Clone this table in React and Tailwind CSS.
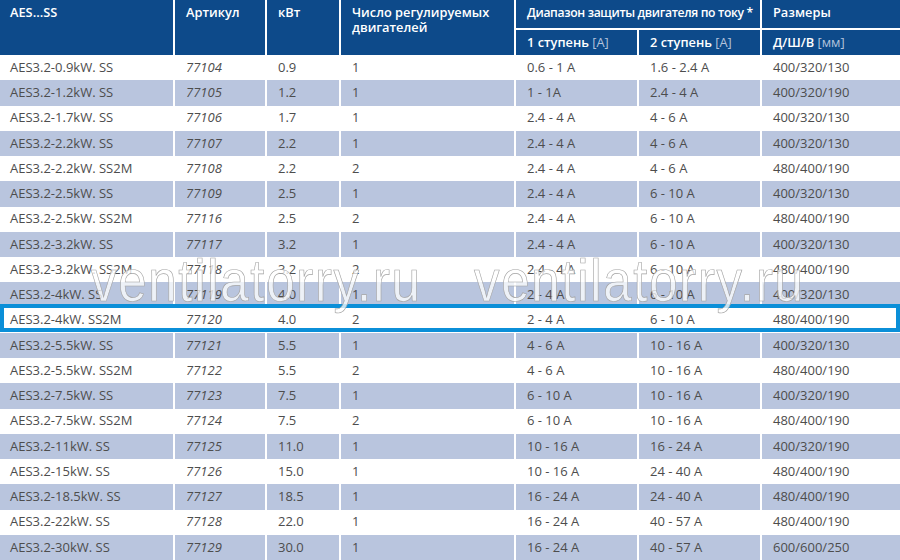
import React from "react";

const rows = [
  ["AES3.2-0.9kW. SS", "77104", "0.9", "1", "0.6 - 1 A", "1.6 - 2.4 A", "400/320/130"],
  ["AES3.2-1.2kW. SS", "77105", "1.2", "1", "1 - 1A", "2.4 - 4 A", "400/320/190"],
  ["AES3.2-1.7kW. SS", "77106", "1.7", "1", "2.4 - 4 A", "4 - 6 A", "400/320/130"],
  ["AES3.2-2.2kW. SS", "77107", "2.2", "1", "2.4 - 4 A", "4 - 6 A", "400/320/130"],
  ["AES3.2-2.2kW. SS2M", "77108", "2.2", "2", "2.4 - 4 A", "4 - 6 A", "480/400/190"],
  ["AES3.2-2.5kW. SS", "77109", "2.5", "1", "2.4 - 4 A", "6 - 10 A", "400/320/130"],
  ["AES3.2-2.5kW. SS2M", "77116", "2.5", "2", "2.4 - 4 A", "6 - 10 A", "480/400/190"],
  ["AES3.2-3.2kW. SS", "77117", "3.2", "1", "2.4 - 4 A", "6 - 10 A", "400/320/130"],
  ["AES3.2-3.2kW. SS2M", "77118", "3.2", "2", "2.4 - 4 A", "6 - 10 A", "480/400/190"],
  ["AES3.2-4kW. SS", "77119", "4.0", "1", "2 - 4 A", "6 - 10 A", "400/320/130"],
  ["AES3.2-4kW. SS2M", "77120", "4.0", "2", "2 - 4 A", "6 - 10 A", "480/400/190"],
  ["AES3.2-5.5kW. SS", "77121", "5.5", "1", "4 - 6 A", "10 - 16 A", "400/320/130"],
  ["AES3.2-5.5kW. SS2M", "77122", "5.5", "2", "4 - 6 A", "10 - 16 A", "480/400/190"],
  ["AES3.2-7.5kW. SS", "77123", "7.5", "1", "6 - 10 A", "10 - 16 A", "400/320/190"],
  ["AES3.2-7.5kW. SS2M", "77124", "7.5", "2", "6 - 10 A", "10 - 16 A", "480/400/190"],
  ["AES3.2-11kW. SS", "77125", "11.0", "1", "10 - 16 A", "16 - 24 A", "400/320/190"],
  ["AES3.2-15kW. SS", "77126", "15.0", "1", "10 - 16 A", "24 - 40 A", "480/400/190"],
  ["AES3.2-18.5kW. SS", "77127", "18.5", "1", "16 - 24 A", "24 - 40 A", "480/400/190"],
  ["AES3.2-22kW. SS", "77128", "22.0", "1", "16 - 24 A", "40 - 57 A", "480/400/190"],
  ["AES3.2-30kW. SS", "77129", "30.0", "1", "16 - 24 A", "40 - 57 A", "600/600/250"],
];

const cols = "grid grid-cols-[173px_90px_72px_173px_121px_121px_1fr] gap-x-[2px]";

function HeadCell({ children, className = "" }) {
  return (
    <div className={"bg-[#0d4a8a] text-white font-semibold text-[12.8px] leading-[15px] pt-[5px] " + className}>
      {children}
    </div>
  );
}

function Watermark({ className }) {
  return (
    <div
      className={
        "absolute top-[251px] text-[60px] leading-none tracking-[2px] whitespace-nowrap scale-x-[0.85] origin-left text-white/75 [-webkit-text-stroke:0.7px_#a3a3a3] pointer-events-none " +
        className
      }
      style={{ fontFamily: '"Liberation Sans", sans-serif' }}
    >
      ventilatorry.ru
    </div>
  );
}

export default function App() {
  return (
    <div
      className="relative w-[900px] h-[560px] overflow-hidden bg-white"
      style={{ fontFamily: '"Open Sans", "Noto Sans", sans-serif' }}
    >
      <div className={cols + " grid-rows-[28px_25px] gap-y-[2px]"}>
        <HeadCell className="row-span-2 px-[10px]">AES...SS</HeadCell>
        <HeadCell className="row-span-2 px-[11px]">Артикул</HeadCell>
        <HeadCell className="row-span-2 px-[11px]">кВт</HeadCell>
        <HeadCell className="row-span-2 px-[11px]">
          Число регулируемых
          <br />
          двигателей
        </HeadCell>
        <HeadCell className="col-span-2 pl-[11px] pr-[2px] whitespace-nowrap !text-[12.2px] tracking-[-0.35px]">
          Диапазон защиты двигателя по току *
        </HeadCell>
        <HeadCell className="px-[11px]">Размеры</HeadCell>
        <HeadCell className="px-[11px]">
          1 ступень <span className="font-normal text-[#b4c3dc]">[A]</span>
        </HeadCell>
        <HeadCell className="px-[11px]">
          2 ступень <span className="font-normal text-[#b4c3dc]">[A]</span>
        </HeadCell>
        <HeadCell className="px-[11px]">
          Д/Ш/В <span className="font-normal text-[#b4c3dc]">[мм]</span>
        </HeadCell>
      </div>

      {rows.map((r, i) => (
        <div key={r[1]} className={cols + " relative h-[25.25px] text-[13px] text-[#4d4d4d]"}>
          {r.map((v, j) => (
            <div
              key={j}
              className={
                "flex items-center " +
                (j === 0 ? "pl-[10px] " : "pl-[11px] ") +
                (j === 1 ? "italic " : "") +
                (i % 2 === 1 ? "bg-[#b9c5de]" : "bg-white")
              }
            >
              {v}
            </div>
          ))}
          {i === 10 && (
            <div className="absolute left-0 right-0 -top-[4px] bottom-[1px] border-[4px] border-[#0b8fd8]" />
          )}
        </div>
      ))}

      <Watermark className="left-[91px]" />
      <Watermark className="left-[474px]" />
    </div>
  );
}
